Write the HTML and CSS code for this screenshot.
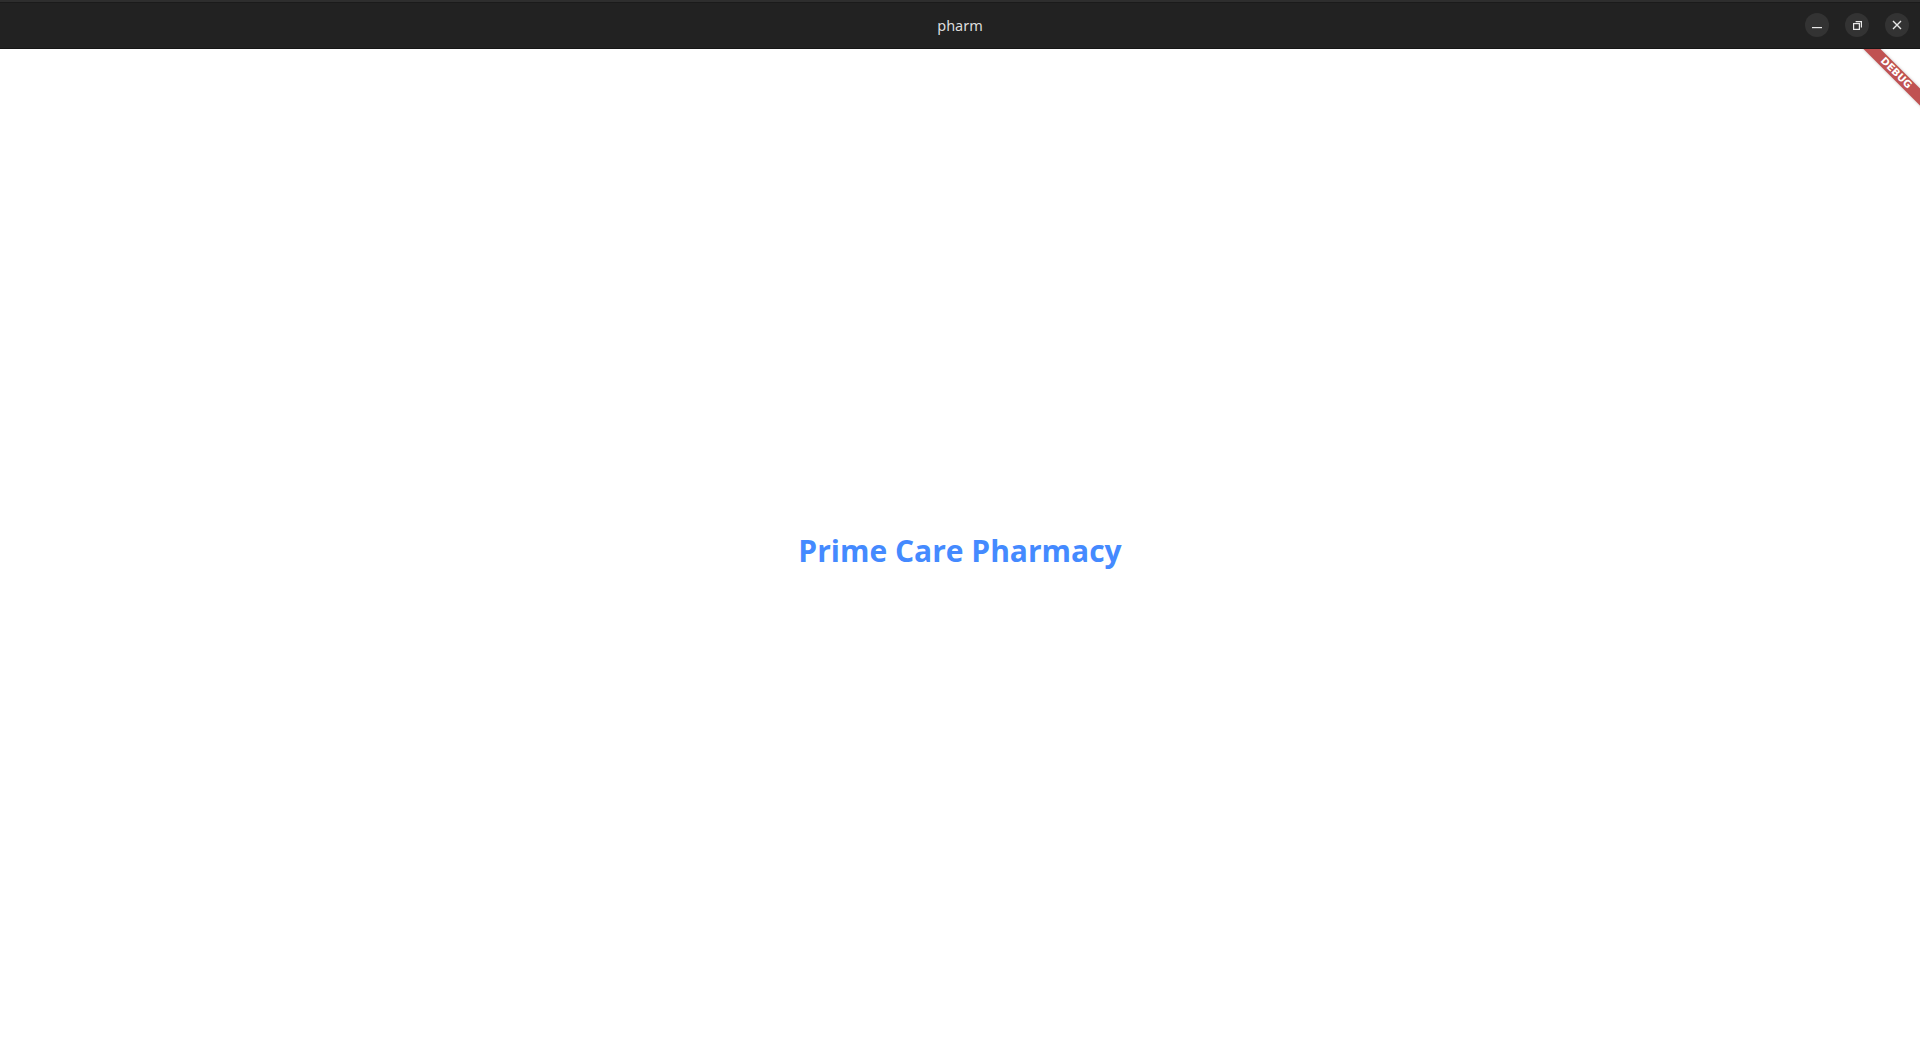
FILE: index.html
```html
<!DOCTYPE html>
<html>
<head>
<meta charset="utf-8">
<link rel="stylesheet" href="styles.css">
</head>
<body>
<div class="window">
  <header class="titlebar">
    <div class="title">pharm</div>
    <div class="controls">
      <div class="btn">
        <svg width="24" height="24" viewBox="0 0 24 24"><rect x="7" y="14" width="10" height="1.2" fill="#e8e8e8"/></svg>
      </div>
      <div class="btn">
        <svg width="24" height="24" viewBox="0 0 24 24" fill="none" stroke="#e8e8e8" stroke-width="1.2"><rect x="8.6" y="10.6" width="5.8" height="5.8"/><path d="M10.6 8.6h5.8v5.8"/></svg>
      </div>
      <div class="btn">
        <svg width="24" height="24" viewBox="0 0 24 24" stroke="#e8e8e8" stroke-width="1.4"><path d="M8 8l8 8M16 8l-8 8"/></svg>
      </div>
    </div>
  </header>
  <main class="content">
    <h1 class="brand">Prime Care Pharmacy</h1>
    <div class="debug"><span>DEBUG</span></div>
  </main>
</div>
</body>
</html>
```
FILE: styles.css
```css
html, body {
  margin: 0;
  padding: 0;
  width: 1920px;
  height: 1050px;
  overflow: hidden;
  background: #ffffff;
}
.window {
  display: flex;
  flex-direction: column;
  height: 1050px;
}
.titlebar {
  height: 46px;
  flex: 0 0 auto;
  background: #222222;
  border-top: 2px solid #2e2e2e;
  border-bottom: 1px solid #161616;
  box-shadow: inset 0 1px 0 #1b1b1b;
  position: relative;
  display: flex;
  align-items: center;
  justify-content: center;
}
.title {
  font-family: "Noto Sans", "DejaVu Sans", sans-serif;
  font-size: 14.5px;
  color: #dcdcdc;
}
.controls {
  position: absolute;
  right: 11px;
  top: 11px;
  display: flex;
  gap: 16px;
}
.btn {
  width: 24px;
  height: 24px;
  border-radius: 50%;
  background: #333333;
  display: flex;
}
.content {
  flex: 1;
  position: relative;
  overflow: hidden;
  display: flex;
  align-items: center;
  justify-content: center;
}
.brand {
  margin: 0;
  font-family: "Open Sans", "Noto Sans", sans-serif;
  font-weight: 700;
  font-size: 30px;
  color: #448aff;
  letter-spacing: 0;
  line-height: 1;
  transform: translateY(1px);
}
.debug {
  position: absolute;
  top: 18px;
  right: -36px;
  width: 120px;
  height: 12px;
  background: #c05252;
  transform: rotate(45deg);
  display: flex;
  align-items: center;
  justify-content: center;
  box-shadow: 0 0 3px rgba(0,0,0,0.25);
}
.debug span {
  font-family: "DejaVu Sans", sans-serif;
  font-weight: bold;
  font-size: 10px;
  color: #ffffff;
  line-height: 12px;
}
```
